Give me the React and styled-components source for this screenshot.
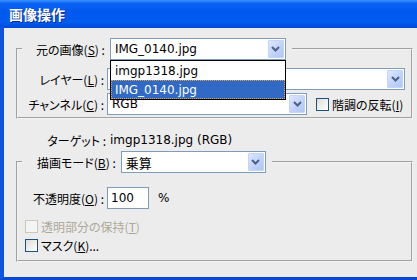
import React from "react";
import styled, { createGlobalStyle } from "styled-components";

const GlobalStyle = createGlobalStyle`
  html, body {
    margin: 0;
    padding: 0;
    overflow: hidden;
    background: #ececec;
  }
`;

const jp = `"Noto Sans CJK JP", "DejaVu Sans", sans-serif`;
const latin = `"DejaVu Sans", "Noto Sans CJK JP", sans-serif`;

const Window = styled.div`
  width: 417px;
  height: 280px;
  display: flex;
  flex-direction: column;
  overflow: hidden;
  font-family: ${jp};
  font-size: 12px;
  font-feature-settings: "palt";
  color: #000;
`;

const TitleBar = styled.div`
  height: 28px;
  flex: none;
  display: flex;
  align-items: center;
  padding-left: 9px;
  color: #fff;
  font-weight: bold;
  font-size: 14px;
  font-feature-settings: normal;
  text-shadow: 1px 1px 0 #0b2a8a;
  background: linear-gradient(
    to bottom,
    #3d95ff 0%,
    #0a62f5 12%,
    #0058ee 40%,
    #025cf0 80%,
    #0049d8 100%
  );
`;

const Frame = styled.div`
  flex: 1;
  background: #ececec;
  border-left: 4px solid #0b55e0;
  border-bottom: 3px solid #0a48d4;
  padding: 10px 4px 0 12px;
  display: flex;
  flex-direction: column;
`;

const Group = styled.fieldset`
  margin: 0;
  padding: 0 4px ${(p) => p.$pb}px 4px;
  min-width: 0;
  border: 2px groove #f4f4f4;
  border-radius: 0;
`;

const Legend = styled.legend`
  display: flex;
  align-items: center;
  gap: ${(p) => p.$gap}px;
  padding: 0 ${(p) => p.$pr}px 0 ${(p) => p.$pl}px;
  margin-left: 0;
`;

const U = styled.span`
  text-decoration: underline;
`;

const Label = styled.span`
  white-space: nowrap;
  font-size: 12px;
  color: ${(p) => (p.$disabled ? "#aca899" : "#000")};
`;

const SelectWrap = styled.div`
  position: relative;
  width: ${(p) => p.$w}px;
  height: 22px;
  box-sizing: border-box;
  border: 1px solid #7f9db9;
  background: #fff;
  display: flex;
  align-items: center;
  padding-left: 4px;
  flex: none;
`;

const Value = styled.span`
  flex: 1;
  font-family: ${(p) => (p.$jp ? jp : latin)};
  font-size: ${(p) => (p.$jp ? 13 : 12)}px;
  white-space: nowrap;
  overflow: hidden;
`;

const ArrowBtn = styled.div`
  width: 16px;
  height: 18px;
  margin-right: 1px;
  box-sizing: border-box;
  border: 1px solid #c5d5fa;
  border-radius: 1px;
  background: linear-gradient(to bottom right, #dde8fe 0%, #bfd1f9 60%, #b0c6f5 100%);
  display: flex;
  align-items: center;
  justify-content: center;
`;

const DropList = styled.div`
  position: absolute;
  left: -1px;
  top: 21px;
  width: 176px;
  box-sizing: border-box;
  border: 1px solid #000;
  background: #fff;
  z-index: 5;
`;

const DropItem = styled.div`
  height: 19px;
  box-sizing: border-box;
  display: flex;
  align-items: center;
  padding-left: 3px;
  font-family: ${latin};
  font-size: 12px;
  background: ${(p) => (p.$selected ? "#316ac5" : "#fff")};
  color: ${(p) => (p.$selected ? "#fff" : "#000")};
  border: 1px dotted ${(p) => (p.$selected ? "#e8a040" : "transparent")};
`;

const Rows = styled.div`
  display: flex;
  flex-direction: column;
  gap: ${(p) => p.$gap}px;
  padding-top: ${(p) => p.$pt}px;
`;

const Row = styled.div`
  display: flex;
  align-items: center;
`;

const RowLabel = styled.span`
  width: ${(p) => p.$w || 82}px;
  flex: none;
  text-align: right;
  white-space: nowrap;
  margin-right: ${(p) => p.$mr || 3}px;
`;

const TextInput = styled.div`
  width: 42px;
  height: 22px;
  box-sizing: border-box;
  border: 1px solid #7f9db9;
  background: #fff;
  display: flex;
  align-items: center;
  padding-left: 3px;
  font-family: ${latin};
  font-size: 12px;
`;

const Unit = styled.span`
  margin-left: 9px;
  font-family: ${latin};
  font-size: 12px;
`;

const CheckRow = styled.div`
  display: flex;
  align-items: center;
  gap: 3px;
  height: 13px;
  margin-left: ${(p) => p.$ml || 0}px;
`;

const Box = styled.span`
  width: 13px;
  height: 13px;
  box-sizing: border-box;
  flex: none;
  border: 1px solid ${(p) => (p.$disabled ? "#cac8bb" : "#1c5180")};
  background: ${(p) =>
    p.$disabled
      ? "#f4f4f4"
      : "linear-gradient(to bottom right, #dcdcd7 0%, #f2f2ef 60%, #ffffff 100%)"};
`;

const TargetRow = styled.div`
  display: flex;
  align-items: center;
  height: 22px;
  margin: 10px 0 0;
`;

const TargetValue = styled.span`
  font-family: ${latin};
  font-size: 12px;
`;

function Chevron() {
  return (
    <svg width="9" height="6" viewBox="0 0 9 6">
      <path d="M1 1 L4.5 4.5 L8 1" fill="none" stroke="#4d6185" strokeWidth="2" />
    </svg>
  );
}

function Select({ w, value, jpValue, children }) {
  return (
    <SelectWrap $w={w}>
      <Value $jp={jpValue}>{value}</Value>
      <ArrowBtn>
        <Chevron />
      </ArrowBtn>
      {children}
    </SelectWrap>
  );
}

export default function App() {
  return (
    <>
      <GlobalStyle />
      <Window>
        <TitleBar>画像操作</TitleBar>
        <Frame>
          <Group $pb={2}>
            <Legend $pl={14} $pr={6} $gap={5}>
              <Label>
                元の画像(<U>S</U>) :
              </Label>
              <Select w={176} value="IMG_0140.jpg">
                <DropList>
                  <DropItem>imgp1318.jpg</DropItem>
                  <DropItem $selected>IMG_0140.jpg</DropItem>
                </DropList>
              </Select>
            </Legend>
            <Rows $gap={3} $pt={8}>
              <Row>
                <RowLabel>
                  レイヤー(<U>L</U>) :
                </RowLabel>
                <Select w={298} value="" />
              </Row>
              <Row>
                <RowLabel>
                  チャンネル(<U>C</U>) :
                </RowLabel>
                <Select w={200} value="RGB" />
                <CheckRow $ml={9}>
                  <Box />
                  <Label>
                    階調の反転(<U>I</U>)
                  </Label>
                </CheckRow>
              </Row>
            </Rows>
          </Group>

          <TargetRow>
            <RowLabel $w={90} $mr={4}>
              ターゲット :
            </RowLabel>
            <TargetValue>imgp1318.jpg (RGB)</TargetValue>
          </TargetRow>

          <Group $pb={8}>
            <Legend $pl={15} $pr={6} $gap={5}>
              <Label>
                描画モード(<U>B</U>) :
              </Label>
              <Select w={145} value="乗算" jpValue />
            </Legend>
            <Rows $gap={11} $pt={14}>
              <Row>
                <RowLabel>
                  不透明度(<U>O</U>) :
                </RowLabel>
                <TextInput>100</TextInput>
                <Unit>%</Unit>
              </Row>
              <Rows $gap={6} $pt={0}>
                <CheckRow $ml={3}>
                  <Box $disabled />
                  <Label $disabled>
                    透明部分の保持(<U>T</U>)
                  </Label>
                </CheckRow>
                <CheckRow $ml={3}>
                  <Box />
                  <Label>
                    マスク(<U>K</U>)...
                  </Label>
                </CheckRow>
              </Rows>
            </Rows>
          </Group>
        </Frame>
      </Window>
    </>
  );
}
